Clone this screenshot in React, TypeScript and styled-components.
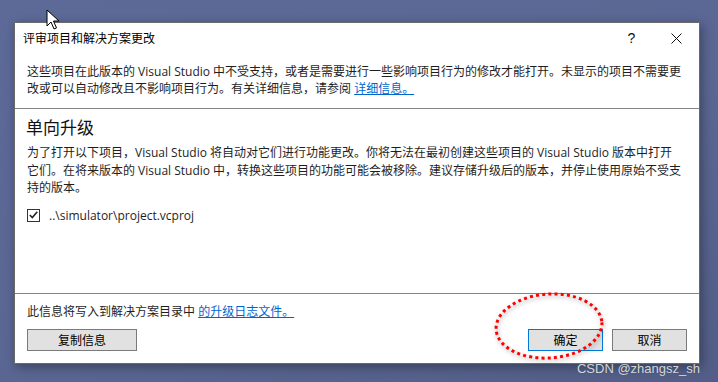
import React from 'react'
import styled, { createGlobalStyle } from 'styled-components'

const GlobalStyle = createGlobalStyle`
    html, body {
        margin: 0;
        padding: 0;
    }
    body {
        font-family: "Open Sans", "Noto Sans CJK SC", sans-serif;
        color: #1e1e1e;
    }
`

const SDesktop = styled.div`
    position: relative;
    width: 718px;
    height: 382px;
    box-sizing: border-box;
    padding: 22px 0 0 14px;
    overflow: hidden;
    background: linear-gradient(160deg, #5d6a98 0%, #5a6793 55%, #525e87 100%);
`

const SDialog = styled.div`
    width: 686px;
    height: 342px;
    box-sizing: border-box;
    display: flex;
    flex-direction: column;
    background: #fff;
    border: 1px solid #6a6a6a;
    box-shadow: 2px 3px 10px rgba(0, 0, 0, 0.35);
    font-size: 12px;
`

const STitleBar = styled.div`
    display: flex;
    align-items: center;
    height: 30px;
    padding-left: 8px;
`

const STitle = styled.div`
    flex: 1;
    font-size: 12px;
    color: #000;
`

const STitleButton = styled.div`
    width: 45px;
    height: 30px;
    display: flex;
    align-items: center;
    justify-content: center;
    font-family: "Liberation Sans", sans-serif;
    font-size: 14px;
    color: #111;
`

const SInfo = styled.div`
    padding: 10px 12px 11px;
    line-height: 17px;
    white-space: nowrap;
    border-bottom: 1px solid #858585;
`

const SLink = styled.a`
    color: #0066cc;
    text-decoration: underline;
    cursor: pointer;
`

const SMain = styled.div`
    flex: 1;
    padding: 8px 12px 0;
`

const SHeading = styled.div`
    font-size: 17px;
    line-height: 22px;
    color: #111;
    margin-left: -1px;
`

const SParagraph = styled.div`
    margin-top: 5px;
    line-height: 17.5px;
    white-space: nowrap;
`

const SCheckRow = styled.div`
    display: flex;
    align-items: center;
    gap: 9px;
    margin-top: 10px;
`

const SCheckBox = styled.div`
    width: 13px;
    height: 13px;
    box-sizing: border-box;
    border: 1px solid #333;
    display: flex;
    align-items: center;
    justify-content: center;
    background: #fff;
`

const SFooter = styled.div`
    border-top: 1px solid #858585;
    padding: 9px 12px 12px;
`

const SFooterText = styled.div`
    line-height: 17px;
    white-space: nowrap;
`

const SButtonRow = styled.div`
    display: flex;
    gap: 9px;
    margin-top: 9px;
`

const SButton = styled.button<{ primary?: boolean; wide?: boolean }>`
    width: ${(props) => (props.wide ? '110px' : '75px')};
    height: 22px;
    box-sizing: border-box;
    padding: 0;
    margin-right: ${(props) => (props.wide ? 'auto' : '0')};
    background: #e1e1e1;
    border: 1px solid ${(props) => (props.primary ? '#0078d7' : '#7a7a7a')};
    font-family: inherit;
    font-size: 12px;
    color: #000;
`

const SCursor = styled.svg`
    position: absolute;
    left: 46px;
    top: 9px;
`

const SMark = styled.svg`
    position: absolute;
    left: 490px;
    top: 288px;
    filter: drop-shadow(1px 2px 2px rgba(0, 0, 0, 0.35));
`

const SWatermark = styled.div`
    position: absolute;
    right: 18px;
    bottom: 6px;
    font-family: "Liberation Sans", sans-serif;
    font-size: 13px;
    color: rgba(255, 255, 255, 0.8);
    text-shadow: 0 0 1px rgba(0, 0, 0, 0.3);
`

const App: React.FC = () => {
    return (
        <>
            <GlobalStyle />
            <SDesktop>
                <SDialog>
                    <STitleBar>
                        <STitle>评审项目和解决方案更改</STitle>
                        <STitleButton>?</STitleButton>
                        <STitleButton>
                            <svg width="11" height="11" viewBox="0 0 11 11">
                                <path d="M0.5 0.5 L10.5 10.5 M10.5 0.5 L0.5 10.5" stroke="#111" strokeWidth="1" />
                            </svg>
                        </STitleButton>
                    </STitleBar>
                    <SInfo>
                        这些项目在此版本的 Visual Studio 中不受支持，或者是需要进行一些影响项目行为的修改才能打开。未显示的项目不需要更
                        <br />
                        改或可以自动修改且不影响项目行为。有关详细信息，请参阅 <SLink>详细信息。</SLink>
                    </SInfo>
                    <SMain>
                        <SHeading>单向升级</SHeading>
                        <SParagraph>
                            为了打开以下项目，Visual Studio 将自动对它们进行功能更改。你将无法在最初创建这些项目的 Visual Studio 版本中打开
                            <br />
                            它们。在将来版本的 Visual Studio 中，转换这些项目的功能可能会被移除。建议存储升级后的版本，并停止使用原始不受支
                            <br />
                            持的版本。
                        </SParagraph>
                        <SCheckRow>
                            <SCheckBox>
                                <svg width="9" height="8" viewBox="0 0 9 8">
                                    <path d="M0.8 4 L3.3 6.6 L8.3 0.8" fill="none" stroke="#222" strokeWidth="1.6" />
                                </svg>
                            </SCheckBox>
                            <span>..\simulator\project.vcproj</span>
                        </SCheckRow>
                    </SMain>
                    <SFooter>
                        <SFooterText>
                            此信息将写入到解决方案目录中 <SLink>的升级日志文件。</SLink>
                        </SFooterText>
                        <SButtonRow>
                            <SButton wide>复制信息</SButton>
                            <SButton primary>确定</SButton>
                            <SButton>取消</SButton>
                        </SButtonRow>
                    </SFooter>
                </SDialog>
                <SCursor width="14" height="22" viewBox="0 0 14 22">
                    <path d="M1 1 L1 17 L5 13 L8 20 L10.5 19 L7.5 12 L13 12 Z" fill="#fff" stroke="#000" strokeWidth="1" />
                </SCursor>
                <SMark width="120" height="76" viewBox="0 0 120 76">
                    <ellipse cx="59" cy="38" rx="53" ry="32" fill="none" stroke="#ff0000" strokeWidth="3" strokeDasharray="3 3.2" transform="rotate(-4 59 38)" />
                </SMark>
                <SWatermark>CSDN @zhangsz_sh</SWatermark>
            </SDesktop>
        </>
    )
}

export default App
